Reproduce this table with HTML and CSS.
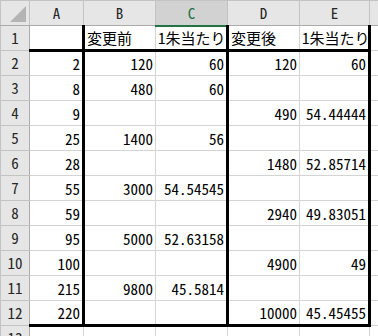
FILE: index.html
```html
<!DOCTYPE html>
<html lang="ja">
<head>
<meta charset="utf-8">
<link rel="stylesheet" href="styles.css">
</head>
<body>
<table class="sheet">
  <colgroup>
    <col class="w-rh"><col class="w-a"><col class="w-b"><col class="w-c"><col class="w-d"><col class="w-e"><col class="w-f">
  </colgroup>
  <thead>
    <tr class="hdr">
      <th class="corner"><svg class="tri" width="16" height="16" viewBox="0 0 16 16"><polygon points="16,0 16,16 0,16" fill="#b4b4b4"/></svg></th>
      <th>A</th><th>B</th><th class="sel">C</th><th>D</th><th>E</th><th></th>
    </tr>
  </thead>
  <tbody>
    <tr><th>1</th><td class="bb"></td><td class="bl bb t">変更前</td><td class="bb t">1朱当たり</td><td class="bl bb t">変更後</td><td class="bb br t">1朱当たり</td><td></td></tr>
    <tr><th>2</th><td>2</td><td class="bl">120</td><td>60</td><td class="bl">120</td><td class="br">60</td><td></td></tr>
    <tr><th>3</th><td>8</td><td class="bl">480</td><td>60</td><td class="bl"></td><td class="br"></td><td></td></tr>
    <tr><th>4</th><td>9</td><td class="bl"></td><td></td><td class="bl">490</td><td class="br">54.44444</td><td></td></tr>
    <tr><th>5</th><td>25</td><td class="bl">1400</td><td>56</td><td class="bl"></td><td class="br"></td><td></td></tr>
    <tr><th>6</th><td>28</td><td class="bl"></td><td></td><td class="bl">1480</td><td class="br">52.85714</td><td></td></tr>
    <tr><th>7</th><td>55</td><td class="bl">3000</td><td>54.54545</td><td class="bl"></td><td class="br"></td><td></td></tr>
    <tr><th>8</th><td>59</td><td class="bl"></td><td></td><td class="bl">2940</td><td class="br">49.83051</td><td></td></tr>
    <tr><th>9</th><td>95</td><td class="bl">5000</td><td>52.63158</td><td class="bl"></td><td class="br"></td><td></td></tr>
    <tr><th>10</th><td>100</td><td class="bl"></td><td></td><td class="bl">4900</td><td class="br">49</td><td></td></tr>
    <tr><th>11</th><td>215</td><td class="bl">9800</td><td>45.5814</td><td class="bl"></td><td class="br"></td><td></td></tr>
    <tr><th>12</th><td class="bb">220</td><td class="bl bb"></td><td class="bb"></td><td class="bl bb">10000</td><td class="br bb">45.45455</td><td></td></tr>
    <tr><th>13</th><td></td><td></td><td></td><td></td><td></td><td></td></tr>
  </tbody>
</table>
</body>
</html>
```

FILE: styles.css
```css
html, body {
  margin: 0;
  padding: 0;
  background: #fff;
  overflow: hidden;
}
body {
  width: 378px;
  height: 336px;
}
.sheet {
  border-collapse: collapse;
  table-layout: fixed;
  width: 417px;
  font-family: "Noto Sans CJK JP", "Noto Sans", sans-serif;
  font-size: 15px;
  font-feature-settings: "hwid" 1;
  color: #000;
}
.w-rh { width: 29px; }
.w-a { width: 54px; }
.w-b { width: 72px; }
.w-c { width: 72px; }
.w-d { width: 72px; }
.w-e { width: 70px; }
.w-f { width: 48px; }
.sheet tr { height: 25px; }
.sheet td {
  border: 1px solid #d4d4d4;
  padding: 0 2px 2px 2px;
  line-height: 18px;
  vertical-align: bottom;
  text-align: right;
  white-space: nowrap;
  overflow: hidden;
}
.sheet td.t { text-align: left; padding-left: 2px; }
.sheet th {
  background: #e6e6e6;
  border: 1px solid #c3c3c3;
  font-weight: normal;
  color: #262626;
  padding: 0;
  line-height: 18px;
  text-align: center;
  vertical-align: middle;
}
.hdr th { border-bottom-color: #ababab; }
.sheet tbody th { border-right-color: #ababab; }
.hdr th.sel {
  background: #d2d2d2;
  color: #217346;
  border-bottom: 2px solid #217346;
}
.tri { display: block; margin: 4px 3px 3px auto; }
.sheet td.bl { border-left: 3px solid #000; }
.sheet td.br { border-right: 3px solid #000; }
.sheet td.bb { border-bottom: 3px solid #000; }
```
